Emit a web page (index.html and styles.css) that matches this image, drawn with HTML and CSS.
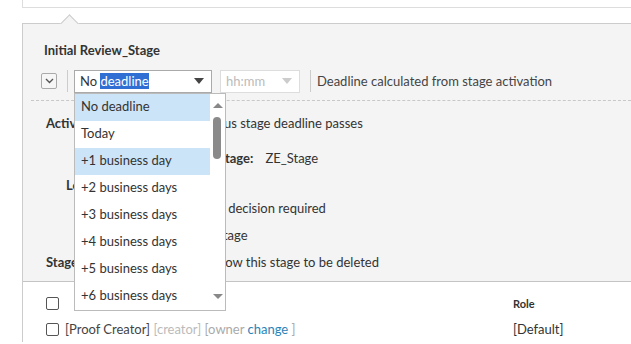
FILE: index.html
```html
<!DOCTYPE html>
<html>
<head>
<meta charset="utf-8">
<link rel="stylesheet" href="styles.css">
</head>
<body>
<div class="top-box"></div>
<div class="panel">
  <div class="notch"></div>
  <div class="panel-gray">
    <h2 class="title">Initial Review_Stage</h2>
    <div class="deadline-row">
      <button class="collapse" type="button">
        <svg width="9" height="6" viewBox="0 0 9 6"><path d="M1 1 L4.5 4.5 L8 1" fill="none" stroke="#555" stroke-width="1.4"/></svg>
      </button>
      <span class="vsep"></span>
      <div class="select main-select">
        <span class="sel-text">No <span class="hl">deadline</span></span>
        <span class="caret"></span>
      </div>
      <div class="select time-select">
        <span class="sel-text">hh:mm</span>
        <span class="caret light"></span>
      </div>
      <span class="vsep"></span>
      <span class="hint">Deadline calculated from stage activation</span>
    </div>
    <div class="dash"></div>
    <div class="form">
      <div class="frow r1"><b class="lbl">Activation:</b><span class="val v1">When previous stage deadline passes</span></div>
      <div class="frow r2"><b class="lbl l2">Previous stage:</b><span class="val v2">ZE_Stage</span></div>
      <div class="frow r3"><b class="lbl l3">Lock:</b><span class="val"></span></div>
      <div class="frow r4"><span class="val v4">Only one decision required</span></div>
      <div class="frow r5"><span class="val v5">Skip this stage</span></div>
      <div class="frow r6"><b class="lbl">Stage:</b><span class="val v6">Allow this stage to be deleted</span></div>
    </div>
  </div>
  <div class="table">
    <div class="trow head">
      <span class="cb"></span>
      <span class="cell-name"></span>
      <b class="cell-role">Role</b>
    </div>
    <div class="trow">
      <span class="cb"></span>
      <span class="cell-name">[Proof Creator] <span class="muted">[creator]</span> <span class="muted2">[owner <a class="link">change</a> ]</span></span>
      <span class="cell-role">[Default]</span>
    </div>
  </div>
</div>

<div class="listbox">
  <ul class="options">
    <li class="on">No deadline</li>
    <li>Today</li>
    <li class="on">+1 business day</li>
    <li>+2 business days</li>
    <li>+3 business days</li>
    <li>+4 business days</li>
    <li>+5 business days</li>
    <li>+6 business days</li>
  </ul>
  <div class="scroll">
    <span class="up"></span>
    <span class="thumb"></span>
    <span class="down"></span>
  </div>
</div>
</body>
</html>
```
FILE: styles.css
```css
* { box-sizing: border-box; }
html, body { margin: 0; padding: 0; }
body {
  width: 631px;
  height: 344px;
  overflow: hidden;
  background: #fff;
  font-family: Lato, "Liberation Sans", sans-serif;
  font-size: 13px;
  color: #333;
  position: relative;
}
.top-box {
  margin-left: 22px;
  height: 8px;
  border-left: 1px solid #ddd;
  border-bottom: 1px solid #ddd;
}
.panel {
  margin-top: 15px;
  margin-left: 22px;
  border-left: 1px solid #ccc;
  border-top: 1px solid #ccc;
  position: relative;
}
.notch {
  position: absolute;
  left: 40px;
  top: -7px;
  width: 13px;
  height: 13px;
  background: #f4f4f4;
  border-left: 1px solid #ccc;
  border-top: 1px solid #ccc;
  transform: rotate(45deg);
}
.panel-gray {
  background: #f4f4f4;
  padding: 17px 0 0 0;
  height: 258px;
  border-bottom: 1px solid #c4c4c4;
  position: relative;
}
.title {
  margin: 0 0 0 21px;
  font-size: 13px;
  font-weight: bold;
  line-height: 18px;
  color: #333;
}
.deadline-row {
  display: flex;
  align-items: center;
  margin-top: 11px;
  height: 22px;
}
.collapse {
  margin-left: 18px;
  width: 16px;
  height: 16px;
  padding: 0;
  border: 1px solid #aaa;
  border-radius: 2px;
  background: #f6f6f6;
  display: flex;
  align-items: center;
  justify-content: center;
}
.vsep {
  width: 1px;
  height: 22px;
  background: #ccc;
  margin: 0 6px 0 10px;
}
.select {
  height: 23px;
  background: #fff;
  border: 1px solid #aaa;
  display: flex;
  align-items: center;
  justify-content: space-between;
  padding: 0 6px 0 5px;
}
.main-select { width: 138px; }
.time-select {
  width: 80px;
  margin-left: 8px;
  border-color: #ddd;
  color: #bbb;
}
.hl {
  background: #2f6fd4;
  color: #fff;
}
.caret {
  width: 0; height: 0;
  border-left: 5px solid transparent;
  border-right: 5px solid transparent;
  border-top: 6px solid #444;
  margin-right: 1px;
}
.caret.light { border-top-color: #ccc; }
.deadline-row .vsep:last-of-type { margin: 0 8px 0 13px; }
.hint { color: #444; }
.dash {
  margin: 8px 0 0 8px;
  border-top: 1px dashed #c8c8c8;
}
.frow {
  display: flex;
  align-items: center;
  position: relative;
  height: 27px;
}
.r1 { margin-top: 8px; }
.r2 { margin-top: 8px; }
.r4 { margin-top: -4px; }
.lbl { color: #333; font-weight: bold; white-space: nowrap; }
.r1 .lbl, .r6 .lbl { margin-left: 23px; }
.l3 { margin-left: 43px; }
.val { white-space: nowrap; color: #333; }
.v1 { margin-left: 41px; }
.l2 { margin-left: 143px; }
.v2 { margin-left: 12px; }
.v4 { margin-left: 150px; }
.v5 { margin-left: 143px; }
.v6 { margin-left: 129px; }
.table { background: #fff; padding-top: 8px; }
.trow {
  display: flex;
  align-items: center;
  height: 26px;
}
.cb {
  width: 13px; height: 13px;
  border: 1px solid #555;
  border-radius: 2px;
  margin-left: 23px;
  margin-right: 6px;
  background: #fff;
}
.cell-name { width: 448px; color: #444; white-space: nowrap; }
.cell-role { color: #333; }
.head .cell-role { font-size: 11px; }
.muted { color: #bbb; }
.muted2 { color: #aaa; }
.link { color: #2a83b8; }

.listbox {
  position: absolute;
  left: 74px;
  top: 93px;
  width: 152px;
  height: 218px;
  background: #fff;
  border: 1px solid #bbb;
  display: flex;
}
.options {
  list-style: none;
  margin: 0;
  padding: 0;
  width: 135px;
}
.options li {
  height: 27px;
  line-height: 25px;
  padding-left: 6px;
  color: #333;
  white-space: nowrap;
}
.options li.on { background: #cce4f7; }
.scroll {
  flex: 1;
  position: relative;
}
.up, .down {
  position: absolute;
  left: 3px;
  width: 0; height: 0;
  border-left: 5px solid transparent;
  border-right: 5px solid transparent;
}
.up { top: 9px; border-bottom: 5px solid #888; }
.down { top: 200px; border-top: 5px solid #888; }
.thumb {
  position: absolute;
  left: 3px;
  top: 23px;
  width: 8px;
  height: 42px;
  border-radius: 4px;
  background: #8a8a8a;
}
```
